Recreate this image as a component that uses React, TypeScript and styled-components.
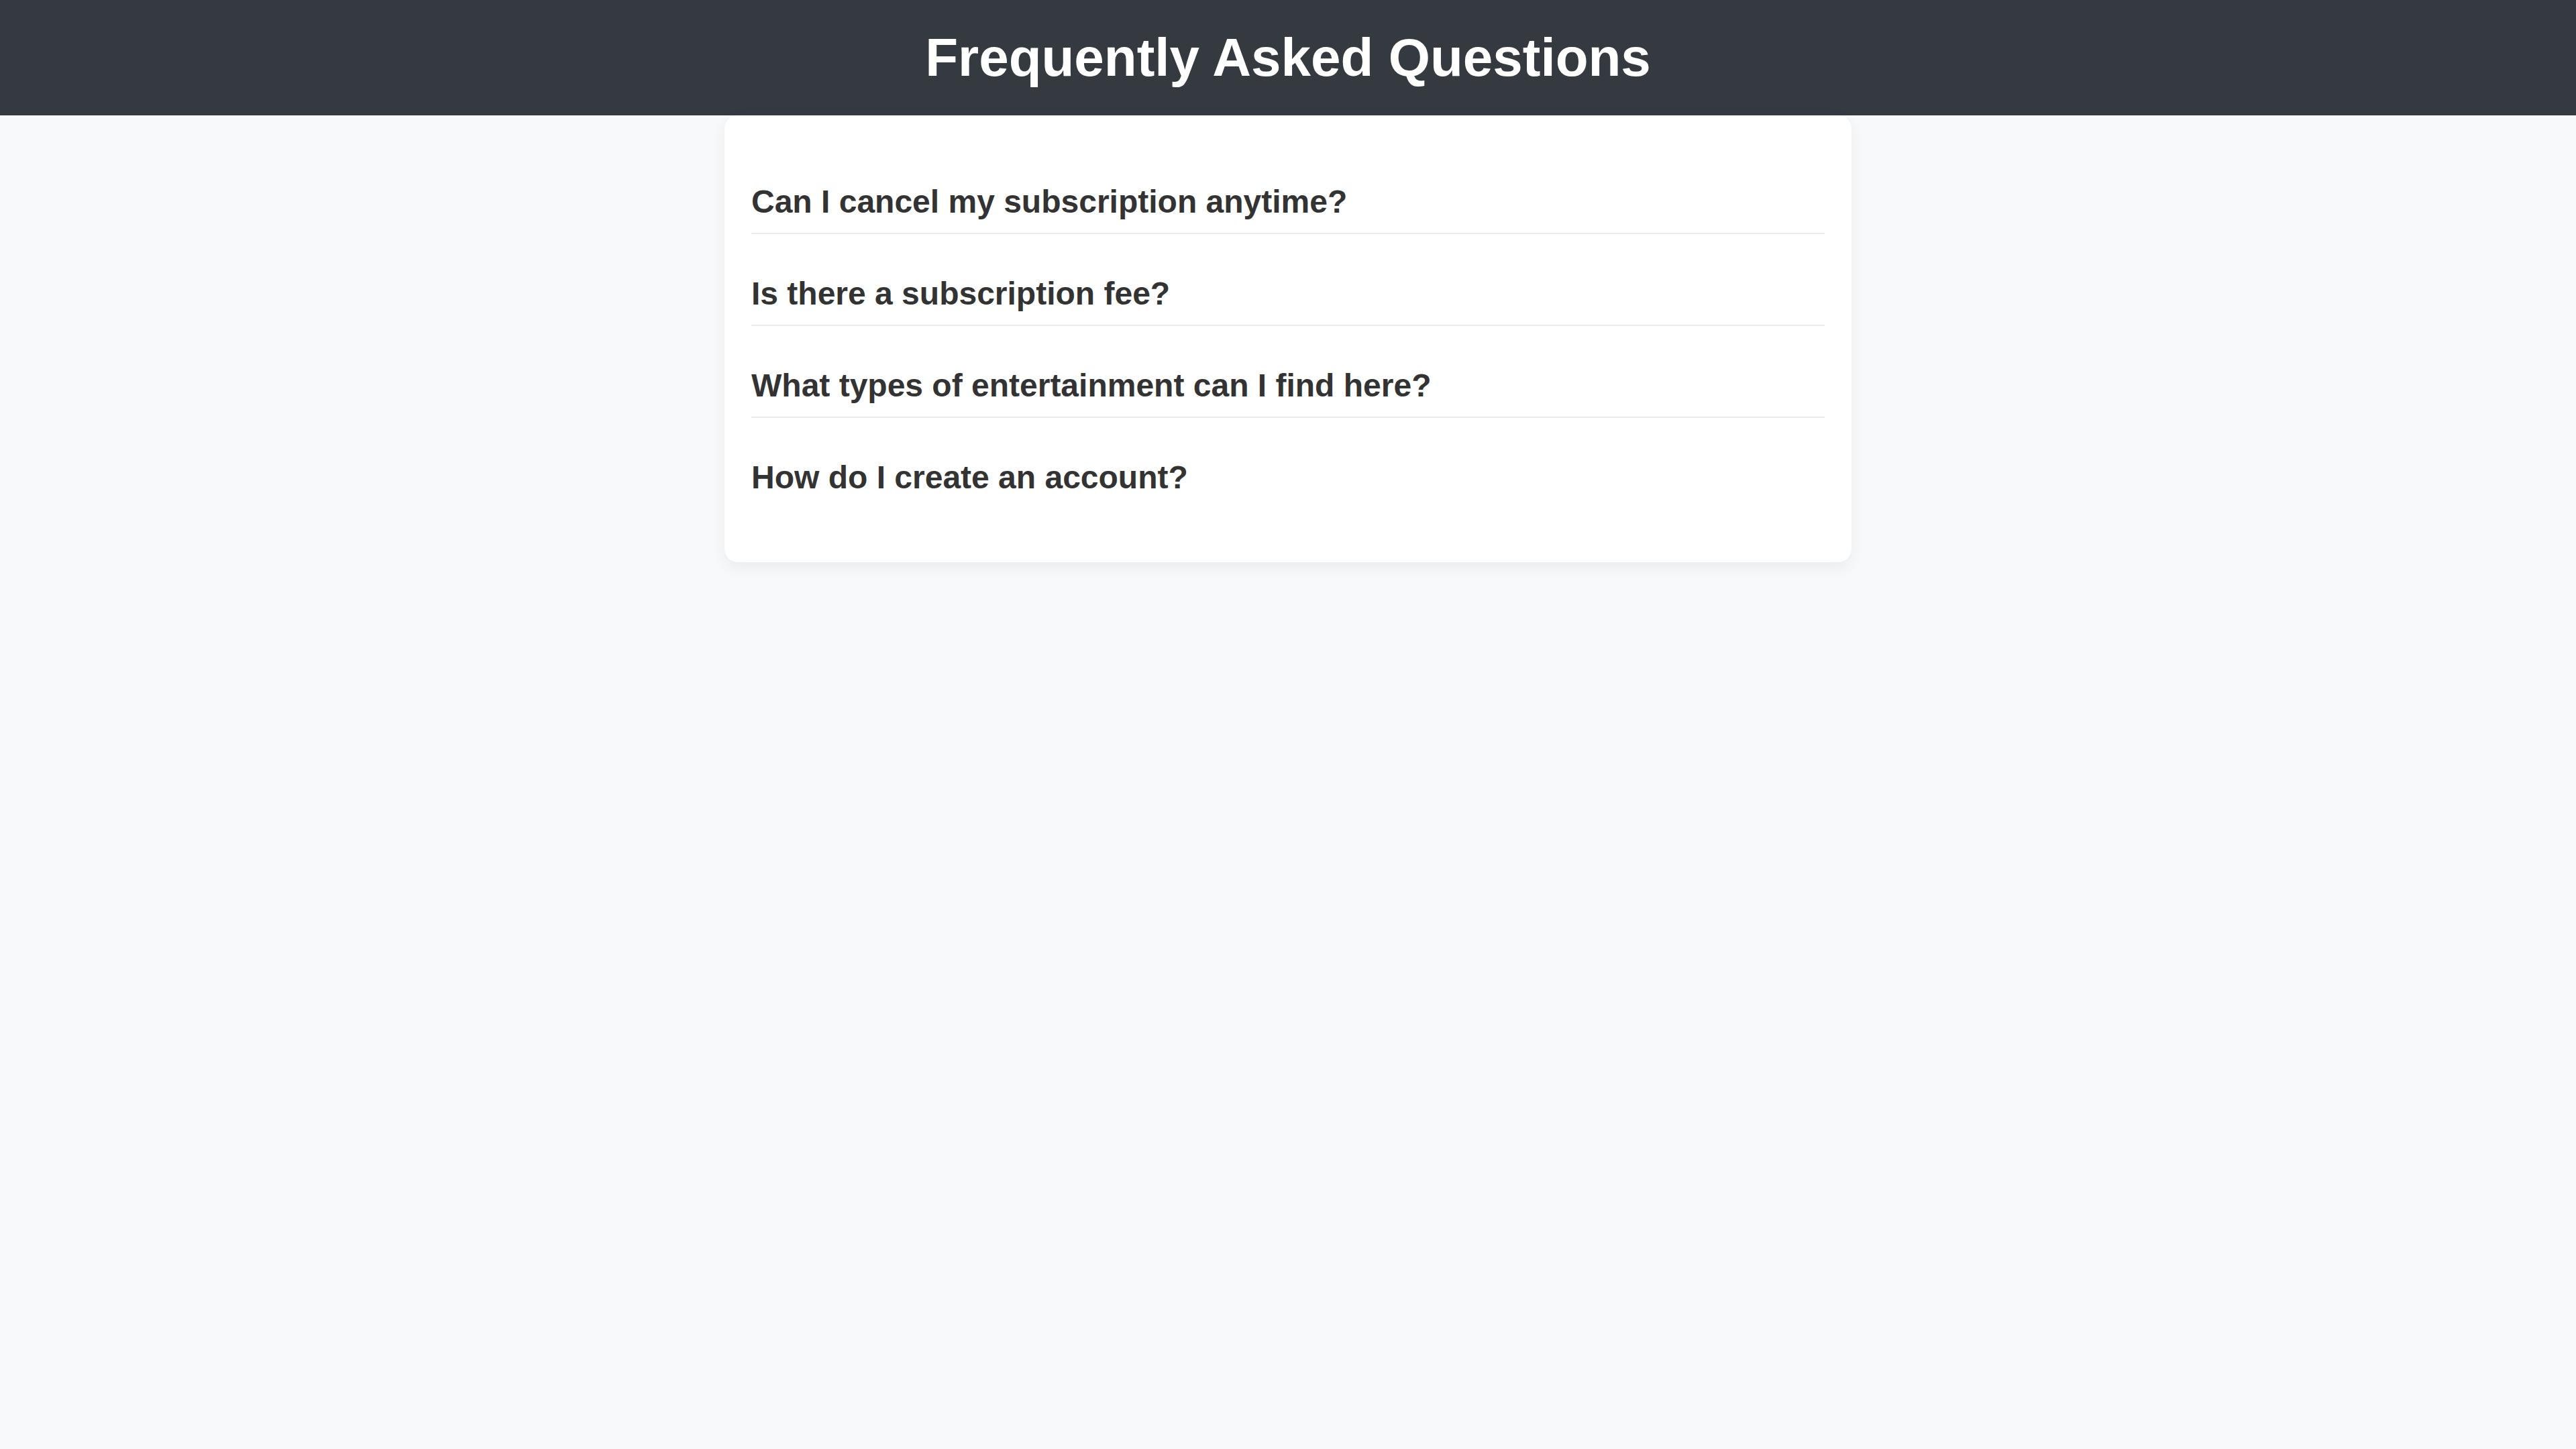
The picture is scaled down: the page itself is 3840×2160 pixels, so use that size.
import styled, { createGlobalStyle } from 'styled-components'

const GlobalStyle = createGlobalStyle`
  html, body {
    margin: 0;
    padding: 0;
    background: #f8f9fa;
    font-family: 'Liberation Sans', Arial, sans-serif;
    color: #333;
  }
`

const faqs = [
  'Can I cancel my subscription anytime?',
  'Is there a subscription fee?',
  'What types of entertainment can I find here?',
  'How do I create an account?',
]

const App = () => {
  return (
    <>
      <GlobalStyle />
      <Page>
        <Header>
          <Title>Frequently Asked Questions</Title>
        </Header>
        <Card>
          {faqs.map((q) => (
            <Item key={q}>
              <Question>{q}</Question>
            </Item>
          ))}
        </Card>
      </Page>
    </>
  )
}

export default App

const Page = styled.div`
  min-height: 100vh;
  display: flex;
  flex-direction: column;
  align-items: center;
`

const Header = styled.header`
  align-self: stretch;
  background: #343a40;
  padding: 40px 0;
  text-align: center;
`

const Title = styled.h1`
  margin: 0;
  font-size: 80px;
  font-weight: 700;
  line-height: 92px;
  color: #ffffff;
`

const Card = styled.main`
  width: 1680px;
  box-sizing: border-box;
  background: #ffffff;
  border-radius: 20px;
  padding: 40px;
  box-shadow: 0 8px 24px rgba(0, 0, 0, 0.06);
`

const Item = styled.div`
  padding: 61px 0 19px;
  border-bottom: 2px solid #ebebeb;

  &:last-child {
    border-bottom: none;
    padding-bottom: 59px;
  }
`

const Question = styled.h3`
  margin: 0;
  font-size: 48px;
  font-weight: 700;
  line-height: 55px;
  color: #333;
`
